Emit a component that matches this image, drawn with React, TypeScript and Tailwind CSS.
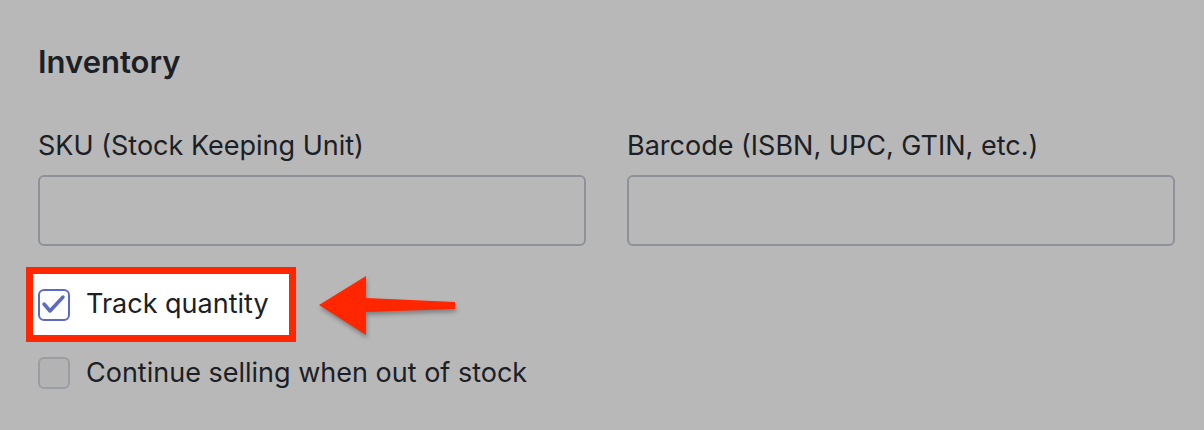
const font = { fontFamily: 'Inter, "Noto Sans", sans-serif' };

const Field = ({ label }: { label: string }) => (
  <div className="flex flex-col">
    <label className="text-[27px] leading-[30px] text-[#1b2026]">{label}</label>
    <div className="mt-[14px] h-[71px] rounded-[6px] border-2 border-[#8e9298]" />
  </div>
);

export default function App() {
  return (
    <div
      className="w-[1204px] h-[430px] overflow-hidden bg-[#b8b8b8] pl-[38px] pr-[29px] pt-[43px]"
      style={font}
    >
      <h2 className="text-[31px] leading-[38px] font-semibold text-[#1b2026]">Inventory</h2>

      <div className="mt-[50px] grid grid-cols-2 gap-x-[41px]">
        <Field label="SKU (Stock Keeping Unit)" />
        <Field label="Barcode (ISBN, UPC, GTIN, etc.)" />
      </div>

      {/* Track quantity, highlighted */}
      <div className="mt-[21px] flex items-center">
        <div className="-ml-[12px] flex h-[75px] items-center gap-[16px] border-[7px] border-[#ff2600] bg-white pl-[5px] pr-[20px]">
          <span className="h-[32px] w-[32px] rounded-[6px] border-2 border-[#5c6ac4]">
            <svg width="28" height="28" viewBox="0 0 28 28" className="-ml-[1px] -mt-[1px]">
              <path
                d="M5 14 L11 21 L24 7"
                fill="none"
                stroke="#5c6ac4"
                strokeWidth="3.5"
                strokeLinecap="round"
                strokeLinejoin="round"
              />
            </svg>
          </span>
          <span className="text-[27px] text-[#1b2026]">Track quantity</span>
        </div>

        <svg className="ml-[22px] drop-shadow-[1px_3px_2px_rgba(0,0,0,0.3)]" width="140" height="62" viewBox="0 0 140 62">
          <path d="M1 31 L48 2 L48 24 L137 28 L137 35 L48 38 L48 61 Z" fill="#ff2600" />
        </svg>
      </div>

      <div className="mt-[11px] flex items-center gap-[16px]">
        <span className="h-[32px] w-[32px] rounded-[6px] border-2 border-[#9a9ea3] bg-[#b3b3b3]" />
        <span className="text-[27px] text-[#1b2026]">Continue selling when out of stock</span>
      </div>
    </div>
  );
}
